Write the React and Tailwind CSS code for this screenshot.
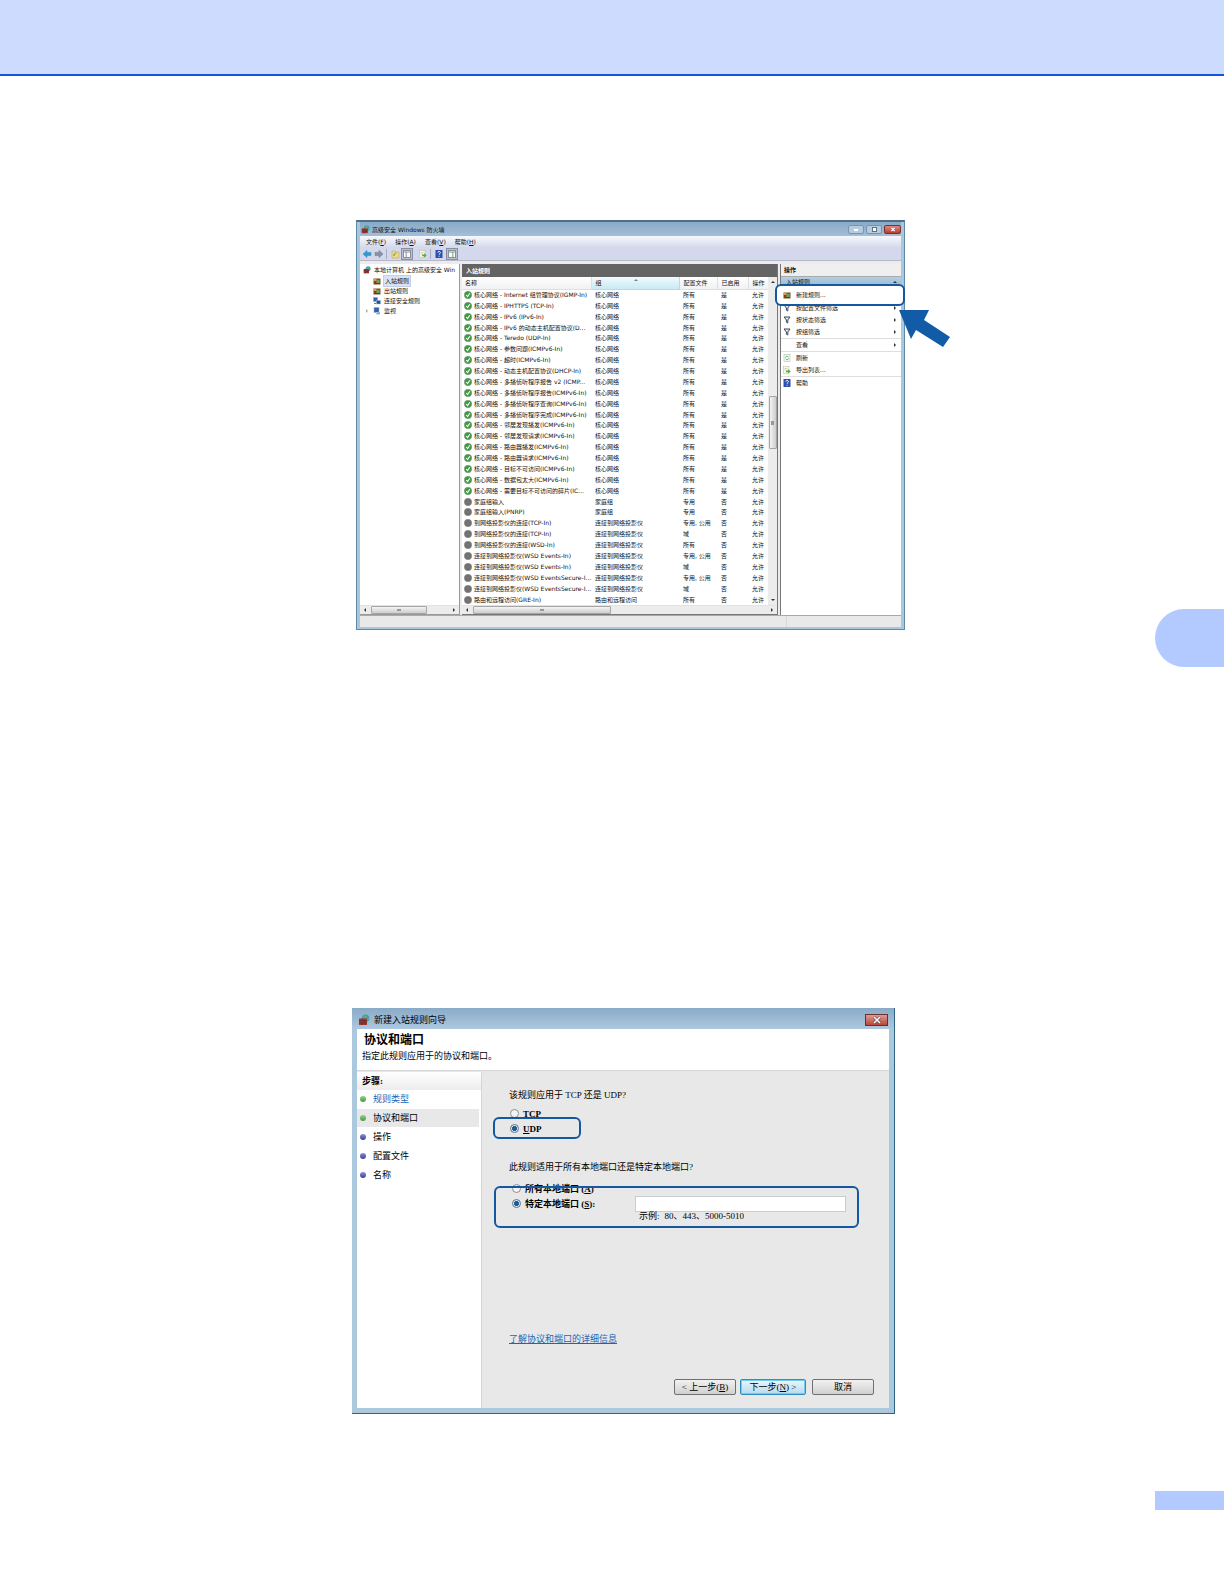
import React, { useState } from 'react';

const core = [
  'Internet 组管理协议(IGMP-In)',
  'IPHTTPS (TCP-In)',
  'IPv6 (IPv6-In)',
  'IPv6 的动态主机配置协议(D...',
  'Teredo (UDP-In)',
  '参数问题(ICMPv6-In)',
  '超时(ICMPv6-In)',
  '动态主机配置协议(DHCP-In)',
  '多播侦听程序报告 v2 (ICMP...',
  '多播侦听程序报告(ICMPv6-In)',
  '多播侦听程序查询(ICMPv6-In)',
  '多播侦听程序完成(ICMPv6-In)',
  '邻居发现播发(ICMPv6-In)',
  '邻居发现请求(ICMPv6-In)',
  '路由器播发(ICMPv6-In)',
  '路由器请求(ICMPv6-In)',
  '目标不可访问(ICMPv6-In)',
  '数据包太大(ICMPv6-In)',
  '需要目标不可访问的碎片(IC...',
];

const rules = [
  ...core.map((name) => ({ name: `核心网络 - ${name}`, group: '核心网络', profile: '所有', on: true })),
  { name: '家庭组输入', group: '家庭组', profile: '专用' },
  { name: '家庭组输入(PNRP)', group: '家庭组', profile: '专用' },
  { name: '到网络投影仪的连接(TCP-In)', group: '连接到网络投影仪', profile: '专用, 公用' },
  { name: '到网络投影仪的连接(TCP-In)', group: '连接到网络投影仪', profile: '域' },
  { name: '到网络投影仪的连接(WSD-In)', group: '连接到网络投影仪', profile: '所有' },
  { name: '连接到网络投影仪(WSD Events-In)', group: '连接到网络投影仪', profile: '专用, 公用' },
  { name: '连接到网络投影仪(WSD Events-In)', group: '连接到网络投影仪', profile: '域' },
  { name: '连接到网络投影仪(WSD EventsSecure-I...', group: '连接到网络投影仪', profile: '专用, 公用' },
  { name: '连接到网络投影仪(WSD EventsSecure-I...', group: '连接到网络投影仪', profile: '域' },
  { name: '路由和远程访问(GRE-In)', group: '路由和远程访问', profile: '所有' },
];

const FirewallIcon = ({ className }) => (
  <svg viewBox="0 0 12 12" className={className}>
    <circle cx="7.6" cy="4.2" r="3.8" fill="#3f9fc4" />
    <path d="M5.6 2.4q2-1.6 3.6.2l-1 1.6-2 .6zM9 5l2-.6-.6 2z" fill="#5db55a" />
    <rect x="1" y="4.5" width="8" height="6.5" fill="#9c3b33" />
    <path d="M1 6.7h8M1 8.9h8M4 4.5v2.2M6.6 6.7v2.2M4 8.9V11" stroke="#5a2420" strokeWidth=".6" />
  </svg>
);

const RuleIcon = () => (
  <svg viewBox="0 0 8 8" className="h-2 w-2 shrink-0">
    <rect x=".5" y="1.5" width="7" height="6" fill="#8b4a35" />
    <rect x="1" y="2" width="2.5" height="2" fill="#e0a03c" />
    <path d="M3.5 3h3v3h-3z" fill="#58ad4c" />
    <path d="M1 6.5h6M1 4.8h2" stroke="#6b2b22" strokeWidth=".7" />
  </svg>
);

const ComputerIcon = () => (
  <svg viewBox="0 0 8 8" className="h-2 w-2 shrink-0">
    <rect x=".5" y=".5" width="4" height="4" fill="#2d62b5" stroke="#8ba5c9" strokeWidth=".5" />
    <rect x="3.5" y="3.5" width="4" height="3.5" fill="#2450a0" stroke="#9db2cf" strokeWidth=".5" />
    <path d="M1 6.5h2" stroke="#6a7c96" />
  </svg>
);

const MonitorIcon = () => (
  <svg viewBox="0 0 8 8" className="h-2 w-2 shrink-0">
    <rect x="1" y=".5" width="5" height="5" fill="#2d62b5" stroke="#9db2cf" strokeWidth=".5" />
    <path d="M3 5h4v2.5H3z" fill="#b9c6d6" />
    <path d="M4 6.2h3" stroke="#56708f" strokeWidth=".6" />
  </svg>
);

const FunnelIcon = () => (
  <svg viewBox="0 0 8 8" className="h-2 w-2 shrink-0">
    <path d="M1 1h6L4.8 4v3l-1.4-.8V4z" fill="#e5eaf0" stroke="#3c4754" strokeWidth="1" />
  </svg>
);

const RefreshIcon = () => (
  <svg viewBox="0 0 8 8" className="h-2 w-2 shrink-0">
    <rect x="1" y=".5" width="6" height="7" fill="#f4faf4" stroke="#a2b3a2" strokeWidth=".5" />
    <path d="M2.4 3.6a1.7 1.7 0 0 1 3-.6M5.6 4.4a1.7 1.7 0 0 1-3 .6" fill="none" stroke="#3d9a47" strokeWidth=".8" />
  </svg>
);

const ExportIcon = () => (
  <svg viewBox="0 0 8 8" className="h-2 w-2 shrink-0">
    <rect x=".5" y=".5" width="5.5" height="7" fill="#fbf8e6" stroke="#b8b49a" strokeWidth=".5" />
    <path d="M1.5 2.5h3M1.5 4h2" stroke="#aaa" strokeWidth=".5" />
    <path d="M3 4.4h2V3.2L7.8 5.4 5 7.6V6.3H3z" fill="#57ae42" />
  </svg>
);

const HelpIcon = () => (
  <svg viewBox="0 0 8 8" className="h-2 w-2 shrink-0">
    <rect x=".5" y="0" width="7" height="8" fill="#2f4fae" />
    <path d="M2.8 2.6c0-1.6 2.6-1.5 2.6 0 0 1-1.3 1-1.3 2.2M4.1 5.8v1" fill="none" stroke="#fff" strokeWidth=".9" />
  </svg>
);

const StatusIcon = ({ on }) => (
  <svg viewBox="0 0 8 8" className="h-2 w-2 shrink-0">
    <circle cx="4" cy="4" r="3.7" fill={on ? '#3c9a41' : '#6f6f6f'} stroke={on ? '#7a9a7c' : '#8d8d8d'} strokeWidth=".6" />
    {on ? (
      <path d="M2.2 4l1.4 1.6L5.8 2.3" fill="none" stroke="#fff" strokeWidth="1.1" />
    ) : (
      <path d="M2.6 2.6l2.8 2.8" stroke="#858585" strokeWidth=".8" />
    )}
  </svg>
);

const Triangle = ({ d, className }) => (
  <svg viewBox="0 0 4 4" className={`h-1 w-1 shrink-0 ${className || ''}`}>
    <path d={d} fill="#333" />
  </svg>
);

const UP = 'M0 3l2-2 2 2z';
const DOWN = 'M0 1l2 2 2-2z';
const LEFT = 'M3 0L1 2l2 2z';
const RIGHT = 'M1 0l2 2-2 2z';

const ScrollX = ({ thumb }) => (
  <div className="flex h-[9px] items-center border-t border-[#e3e3e3] bg-[#ececec] px-[3px]">
    <Triangle d={LEFT} />
    <div className="flex h-full flex-1 px-1">
      <div className={`flex h-full items-center justify-center rounded-[1px] border border-[#a5a5a5] bg-linear-to-b from-[#f4f4f4] to-[#cdcdcd] ${thumb}`}>
        <span className="h-[2px] w-1 bg-[#999]" />
      </div>
    </div>
    <Triangle d={RIGHT} />
  </div>
);

const Toolbar = () => (
  <div className="flex h-[13px] items-center bg-[#d3d8ec] px-[2px]">
    <button aria-label="后退">
      <svg viewBox="0 0 10 10" className="h-[10px] w-[10px]">
        <path d="M1 5l4-3.6v2h4v3.2H5v2z" fill="#2f9ad0" stroke="#4a7ea6" strokeWidth=".5" />
      </svg>
    </button>
    <button aria-label="前进" className="ml-[2px]">
      <svg viewBox="0 0 10 10" className="h-[10px] w-[10px]">
        <path d="M9 5L5 1.4v2H1v3.2h4v2z" fill="#8a93a5" stroke="#6d7587" strokeWidth=".5" />
      </svg>
    </button>
    <span className="mr-[3px] ml-[2px] h-[10px] w-px bg-[#a5abc0]" />
    <button aria-label="向上">
      <svg viewBox="0 0 10 10" className="h-[10px] w-[10px]">
        <path d="M2 2h3l1 1h3v6H2z" fill="#eed98a" stroke="#b59d50" strokeWidth=".5" />
        <path d="M4 7c0-2 .5-2.6 2.4-3" fill="none" stroke="#3d9a47" />
      </svg>
    </button>
    <button aria-label="显示控制台树" className="ml-[1px] flex h-3 w-3 items-center justify-center border border-[#888fa0] bg-[#b9bfd0]">
      <svg viewBox="0 0 8 8" className="h-2 w-2">
        <rect x=".5" y=".5" width="7" height="7" fill="#fafafa" stroke="#8a8f9c" />
        <path d="M1 2h6M3.2 2v5.5" stroke="#8a8f9c" />
      </svg>
    </button>
    <button aria-label="导出列表" className="ml-[6px]">
      <ExportIcon />
    </button>
    <span className="mr-1 ml-[3px] h-[10px] w-px bg-[#a5abc0]" />
    <button aria-label="帮助">
      <HelpIcon />
    </button>
    <button aria-label="显示操作窗格" className="ml-[3px] flex h-3 w-3 items-center justify-center border border-[#888fa0] bg-[#b9bfd0]">
      <svg viewBox="0 0 8 8" className="h-2 w-2">
        <rect x=".5" y=".5" width="7" height="7" fill="#fafafa" stroke="#8a8f9c" />
        <path d="M1 2h6M4.8 2v5.5" stroke="#6fa786" />
      </svg>
    </button>
  </div>
);

const TreeItem = ({ icon, label, selected, expandable }) => (
  <li className="flex h-[10px] items-center pl-[5px] first:h-[11px]">
    <span className="w-2">{expandable && <Triangle d={RIGHT} className="opacity-40" />}</span>
    {icon}
    <a href="#tree" className={selected ? 'ml-[2px] border border-[#c3cde6] bg-[#dbe2f3] px-px' : 'ml-[3px]'}>
      {label}
    </a>
  </li>
);

const RuleTable = () => (
  <table className="h-full w-full table-fixed border-collapse text-left">
    <colgroup>
      <col className="w-[129px]" />
      <col className="w-[88px]" />
      <col className="w-[38px]" />
      <col className="w-[31px]" />
      <col />
    </colgroup>
    <thead>
      <tr className="h-3 bg-linear-to-b from-white to-[#f0f1f3]">
        <th className="border-r border-b border-[#dcdfe4] p-0 pl-[3px] font-normal">名称</th>
        <th className="border-r border-b border-[#b5dbe8] bg-linear-to-b from-[#f0fafd] to-[#c9e9f4] p-0 pl-1 font-normal">
          <div className="flex items-start">
            组
            <Triangle d={UP} className="ml-8 opacity-60" />
          </div>
        </th>
        <th className="border-r border-b border-[#dcdfe4] p-0 pl-1 font-normal">配置文件</th>
        <th className="border-r border-b border-[#dcdfe4] p-0 pl-1 font-normal">已启用</th>
        <th className="border-b border-[#dcdfe4] p-0 pl-1 font-normal">操作</th>
      </tr>
    </thead>
    <tbody>
      {rules.map((r, i) => (
        <tr key={i}>
          <td className="p-0">
            <div className="flex items-center gap-[2px] pl-[2px] whitespace-nowrap">
              <StatusIcon on={r.on} />
              {r.name}
            </div>
          </td>
          <td className="p-0 pl-1 whitespace-nowrap">{r.group}</td>
          <td className="p-0 pl-1 whitespace-nowrap">{r.profile}</td>
          <td className="p-0 pl-1">{r.on ? '是' : '否'}</td>
          <td className="p-0 pl-1 whitespace-nowrap">允许</td>
        </tr>
      ))}
    </tbody>
  </table>
);

const Action = ({ icon, label, arrow, divider }) => (
  <li className={`flex items-center pr-1 pl-[2px] ${divider ? 'h-[13px] border-b border-[#dedede]' : 'h-3'}`}>
    <button className="flex flex-1 items-center gap-[5px] text-left">
      {icon || <span className="w-2" />}
      {label}
    </button>
    {arrow && <Triangle d={RIGHT} />}
  </li>
);

const ActionPane = () => (
  <aside className="flex w-[121px] flex-col border-l border-[#777] bg-white">
    <h3 className="h-3 bg-[#efefef] pl-[3px] leading-3 font-bold">操作</h3>
    <div className="flex h-[13px] items-center justify-between border-t border-[#aaa] bg-linear-to-b from-[#b4cfe4] to-[#8fb2cf] pr-1 pb-[2px] pl-[5px]">
      入站规则
      <Triangle d={UP} />
    </div>
    <ul>
      <li className="relative h-[13px]">
        {/* callout ring and pointer over the pane */}
        <button className="absolute -top-[5px] -right-1 -left-[6px] z-10 flex h-[22px] items-center gap-[5px] rounded-[6px] border-2 border-[#15589f] bg-white pl-[6px]">
          <RuleIcon />
          新建规则...
        </button>
        <svg viewBox="0 0 52 38" className="absolute top-[21px] left-[118px] z-10 h-[38px] w-[52px]">
          <path d="M0 0h30l-5 10 26 17-7 10-27-17-5 9z" fill="#115ba7" />
        </svg>
      </li>
      <Action icon={<FunnelIcon />} label="按配置文件筛选" arrow />
      <Action icon={<FunnelIcon />} label="按状态筛选" arrow />
      <Action icon={<FunnelIcon />} label="按组筛选" arrow divider />
      <Action label="查看" arrow divider />
      <Action icon={<RefreshIcon />} label="刷新" />
      <Action icon={<ExportIcon />} label="导出列表..." divider />
      <Action icon={<HelpIcon />} label="帮助" />
    </ul>
  </aside>
);

const FirewallWindow = () => (
  <section className="ml-1 w-full max-w-[549px] border-x border-t-2 border-b border-[#5f89a5] border-t-[#4d6f8c] bg-[#a9c8de] px-[3px] pb-[2px] font-['DejaVu_Sans','Noto_Sans_CJK_SC',sans-serif] text-[6px] leading-[10px] text-[#111]">
    <header className="flex h-[14px] items-center justify-between bg-linear-to-b from-[#8aaac6] to-[#a3bfd8] pt-px">
      <h2 className="flex items-center gap-[2px] pl-px">
        <FirewallIcon className="h-[9px] w-[9px]" />
        高级安全 Windows 防火墙
      </h2>
      <div className="flex gap-[2px]">
        <button aria-label="最小化" className="flex h-[9px] w-4 items-center justify-center rounded-[2px] border border-[#7893ad] bg-[#b5cbdf]">
          <span className="h-[2px] w-1 bg-white" />
        </button>
        <button aria-label="最大化" className="flex h-[9px] w-4 items-center justify-center rounded-[2px] border border-[#7893ad] bg-[#b5cbdf]">
          <span className="h-[5px] w-[5px] border border-[#5d6f80] bg-white" />
        </button>
        <button aria-label="关闭" className="flex h-[9px] w-[17px] items-center justify-center rounded-[2px] border border-[#7a2f2a] bg-linear-to-b from-[#d98b82] to-[#b83b2c]">
          <svg viewBox="0 0 6 6" className="h-[5px] w-[6px]">
            <path d="M1 1l4 4M5 1L1 5" stroke="#fff" strokeWidth="1.4" />
          </svg>
        </button>
      </div>
    </header>
    <nav className="flex h-[11px] items-center gap-[9px] bg-linear-to-b from-[#f6f8fc] to-[#d6dbed] pl-[6px]">
      <button>文件(<u>F</u>)</button>
      <button>操作(<u>A</u>)</button>
      <button>查看(<u>V</u>)</button>
      <button>帮助(<u>H</u>)</button>
    </nav>
    <Toolbar />
    <div className="flex gap-[2px] border-t border-[#b5b9c5] bg-[#ececf0] pt-[3px]">
      <div className="flex w-[100px] flex-col border-r border-b border-[#999] bg-white">
        <div className="flex h-[11px] items-center gap-[3px] pl-[3px] whitespace-nowrap">
          <FirewallIcon className="h-2 w-2 shrink-0" />
          本地计算机 上的高级安全 Win
        </div>
        <ul>
          <TreeItem icon={<RuleIcon />} label="入站规则" selected />
          <TreeItem icon={<RuleIcon />} label="出站规则" />
          <TreeItem icon={<ComputerIcon />} label="连接安全规则" />
          <TreeItem icon={<MonitorIcon />} label="监视" expandable />
        </ul>
        <div className="mt-auto">
          <ScrollX thumb="w-[56px]" />
        </div>
      </div>
      <div className="flex min-w-0 flex-1 flex-col border-r border-b border-[#777] bg-white">
        <h3 className="h-[13px] bg-[#646464] pl-1 leading-[13px] font-bold text-white">入站规则</h3>
        <div className="flex">
          <div className="h-[328px] min-w-0 flex-1">
            <RuleTable />
          </div>
          <div className="flex w-[9px] flex-col items-center bg-[#ececec] py-[3px]">
            <Triangle d={UP} />
            <div className="mt-[112px] flex h-[53px] w-2 items-center justify-center rounded-[1px] border border-[#a5a5a5] bg-linear-to-r from-[#f4f4f4] to-[#cdcdcd]">
              <span className="h-1 w-[3px] bg-[#999]" />
            </div>
            <Triangle d={DOWN} className="mt-auto" />
          </div>
        </div>
        <ScrollX thumb="w-[138px]" />
      </div>
      <ActionPane />
    </div>
    <footer className="h-3 border-t border-[#aaa] bg-[#e9e9e9]">
      <div className="ml-[426px] h-full border-l border-[#d8d8d8]" />
    </footer>
  </section>
);

const steps = [
  { label: '规则类型', done: true, link: true },
  { label: '协议和端口', done: true, active: true },
  { label: '操作' },
  { label: '配置文件' },
  { label: '名称' },
];

const Radio = ({ id, name, checked, onChange, children }) => (
  <div className="flex h-[15px] items-center gap-1 pl-px">
    <input
      type="radio"
      id={id}
      name={name}
      checked={checked}
      onChange={onChange}
      className="h-[9px] w-[9px] appearance-none rounded-full border border-[#8e8f8f] bg-[#f4f4f4] checked:border-[#5c7488] checked:bg-[radial-gradient(circle,#1f5e96_45%,#dcebf5_55%)]"
    />
    <label htmlFor={id} className="font-bold">{children}</label>
  </div>
);

const wizardButton = 'h-4 rounded-[2px] border bg-linear-to-b leading-[14px]';

const WizardWindow = () => {
  const [protocol, setProtocol] = useState('udp');
  const [scope, setScope] = useState('specific');
  const [ports, setPorts] = useState('');

  return (
    <section className="w-full max-w-[543px] border-r border-b border-[#2f6480] bg-[#abc8dd] pr-[5px] pb-[5px] pl-[5px] font-['Liberation_Serif','Noto_Sans_CJK_SC',serif] text-[9px] leading-[14px] text-black">
      <header className="-mx-[5px] flex h-[21px] items-center justify-between bg-linear-to-b from-[#8aabc8] to-[#adc7df] px-[6px] pt-[2px]">
        <h2 className="flex items-center gap-1">
          <FirewallIcon className="h-3 w-3" />
          新建入站规则向导
        </h2>
        <button aria-label="关闭" className="flex h-3 w-[23px] items-center justify-center border border-[#6d2f2c] bg-linear-to-b from-[#dd9a94] to-[#bb4438]">
          <svg viewBox="0 0 8 8" className="h-2 w-2">
            <path d="M1 1l6 6M7 1L1 7" stroke="#5a3a3a" strokeWidth="2.6" />
            <path d="M1 1l6 6M7 1L1 7" stroke="#fff" strokeWidth="1.6" />
          </svg>
        </button>
      </header>
      <div className="h-[42px] border-b border-[#d8d8d8] bg-white pt-[2px] pl-[5px]">
        <h3 className="pl-[2px] text-[12px] leading-[18px] font-bold">协议和端口</h3>
        <p>指定此规则应用于的协议和端口。</p>
      </div>
      <div className="flex min-h-[337px] bg-[#e8e8e8] pt-px">
        <nav className="w-[125px] border-r border-[#d5d5d5] bg-white">
          <h4 className="h-[18px] bg-linear-to-b from-white to-[#ececec] pl-[5px] leading-[18px] font-bold">步骤:</h4>
          <ol className="flex flex-col">
            {steps.map((s) => (
              <li key={s.label} className={`mr-[2px] mb-px flex h-[18px] items-center gap-[7px] pl-[3px] ${s.active ? 'bg-[#e8e8e8]' : ''}`}>
                <span
                  className={`h-[6px] w-[6px] rounded-full bg-linear-to-b ${s.done ? 'from-[#8fd08a] to-[#3f9f3c]' : 'from-[#8f8fd8] to-[#3f3f96]'}`}
                />
                {s.link ? <a href="#type" className="text-[#1b66b5]">{s.label}</a> : s.label}
              </li>
            ))}
          </ol>
        </nav>
        <form className="flex flex-1 flex-col pt-4 pr-[15px] pb-[13px] pl-[27px]" onSubmit={(e) => e.preventDefault()}>
          <p>该规则应用于 TCP 还是 UDP?</p>
          <div className="relative mt-1">
            <Radio id="tcp" name="protocol" checked={protocol === 'tcp'} onChange={() => setProtocol('tcp')}>TCP</Radio>
            <Radio id="udp" name="protocol" checked={protocol === 'udp'} onChange={() => setProtocol('udp')}><u>U</u>DP</Radio>
            <div className="pointer-events-none absolute top-[11px] -left-4 h-[22px] w-[88px] rounded-[6px] border-2 border-[#15589f]" />
          </div>
          <p className="mt-[24px]">此规则适用于所有本地端口还是特定本地端口?</p>
          <div className="relative mt-[7px] pl-[2px]">
            <Radio id="all" name="scope" checked={scope === 'all'} onChange={() => setScope('all')}>所有本地端口 (<u>A</u>)</Radio>
            <div className="flex">
              <div className="w-[124px]">
                <Radio id="specific" name="scope" checked={scope === 'specific'} onChange={() => setScope('specific')}>特定本地端口 (<u>S</u>):</Radio>
              </div>
              <div>
                <input
                  aria-label="特定本地端口"
                  value={ports}
                  onChange={(e) => setPorts(e.target.value)}
                  className="block h-4 w-[211px] border border-[#c9cdd2] bg-white px-1"
                />
                <p className="flex gap-[5px] pl-1 leading-2">
                  <span>示例:</span>
                  <span>80、443、5000-5010</span>
                </p>
              </div>
            </div>
            <div className="pointer-events-none absolute top-[5px] -left-[15px] h-[42px] w-[365px] rounded-[6px] border-2 border-[#15589f]" />
          </div>
          <a href="#ports" className="mt-auto mb-[33px] self-start text-[#1b66b5] underline">了解协议和端口的详细信息</a>
          <div className="flex justify-end">
            <button className={`${wizardButton} w-[62px] border-[#707070] from-[#f2f2f2] to-[#d0d0d0]`}>&lt; 上一步(<u>B</u>)</button>
            <button className={`${wizardButton} ml-1 w-[66px] border-[#2f8fc0] from-[#eaf6fc] to-[#b5dcf0] shadow-[inset_0_0_0_1px_#6fcdf0]`}>下一步(<u>N</u>) &gt;</button>
            <button type="button" className={`${wizardButton} ml-[6px] w-[62px] border-[#707070] from-[#f2f2f2] to-[#d0d0d0]`}>取消</button>
          </div>
        </form>
      </div>
    </section>
  );
};

const App = () => (
  <div lang="zh-CN" className="flex min-h-screen flex-col bg-white">
    <header className="h-[76px] border-b-2 border-[#1252dc] bg-[#ccdbfe]" />
    <div className="flex flex-1">
      <main className="flex flex-1 flex-col gap-[378px] pt-[144px] pl-[352px]">
        <FirewallWindow />
        <WizardWindow />
      </main>
      <aside className="flex w-[69px] flex-col justify-between pt-[533px] pb-[74px]">
        <div className="h-[58px] rounded-l-full bg-[#b2caff]" />
        <div className="h-[19px] bg-[#b2caff]" />
      </aside>
    </div>
  </div>
);

export default App;
